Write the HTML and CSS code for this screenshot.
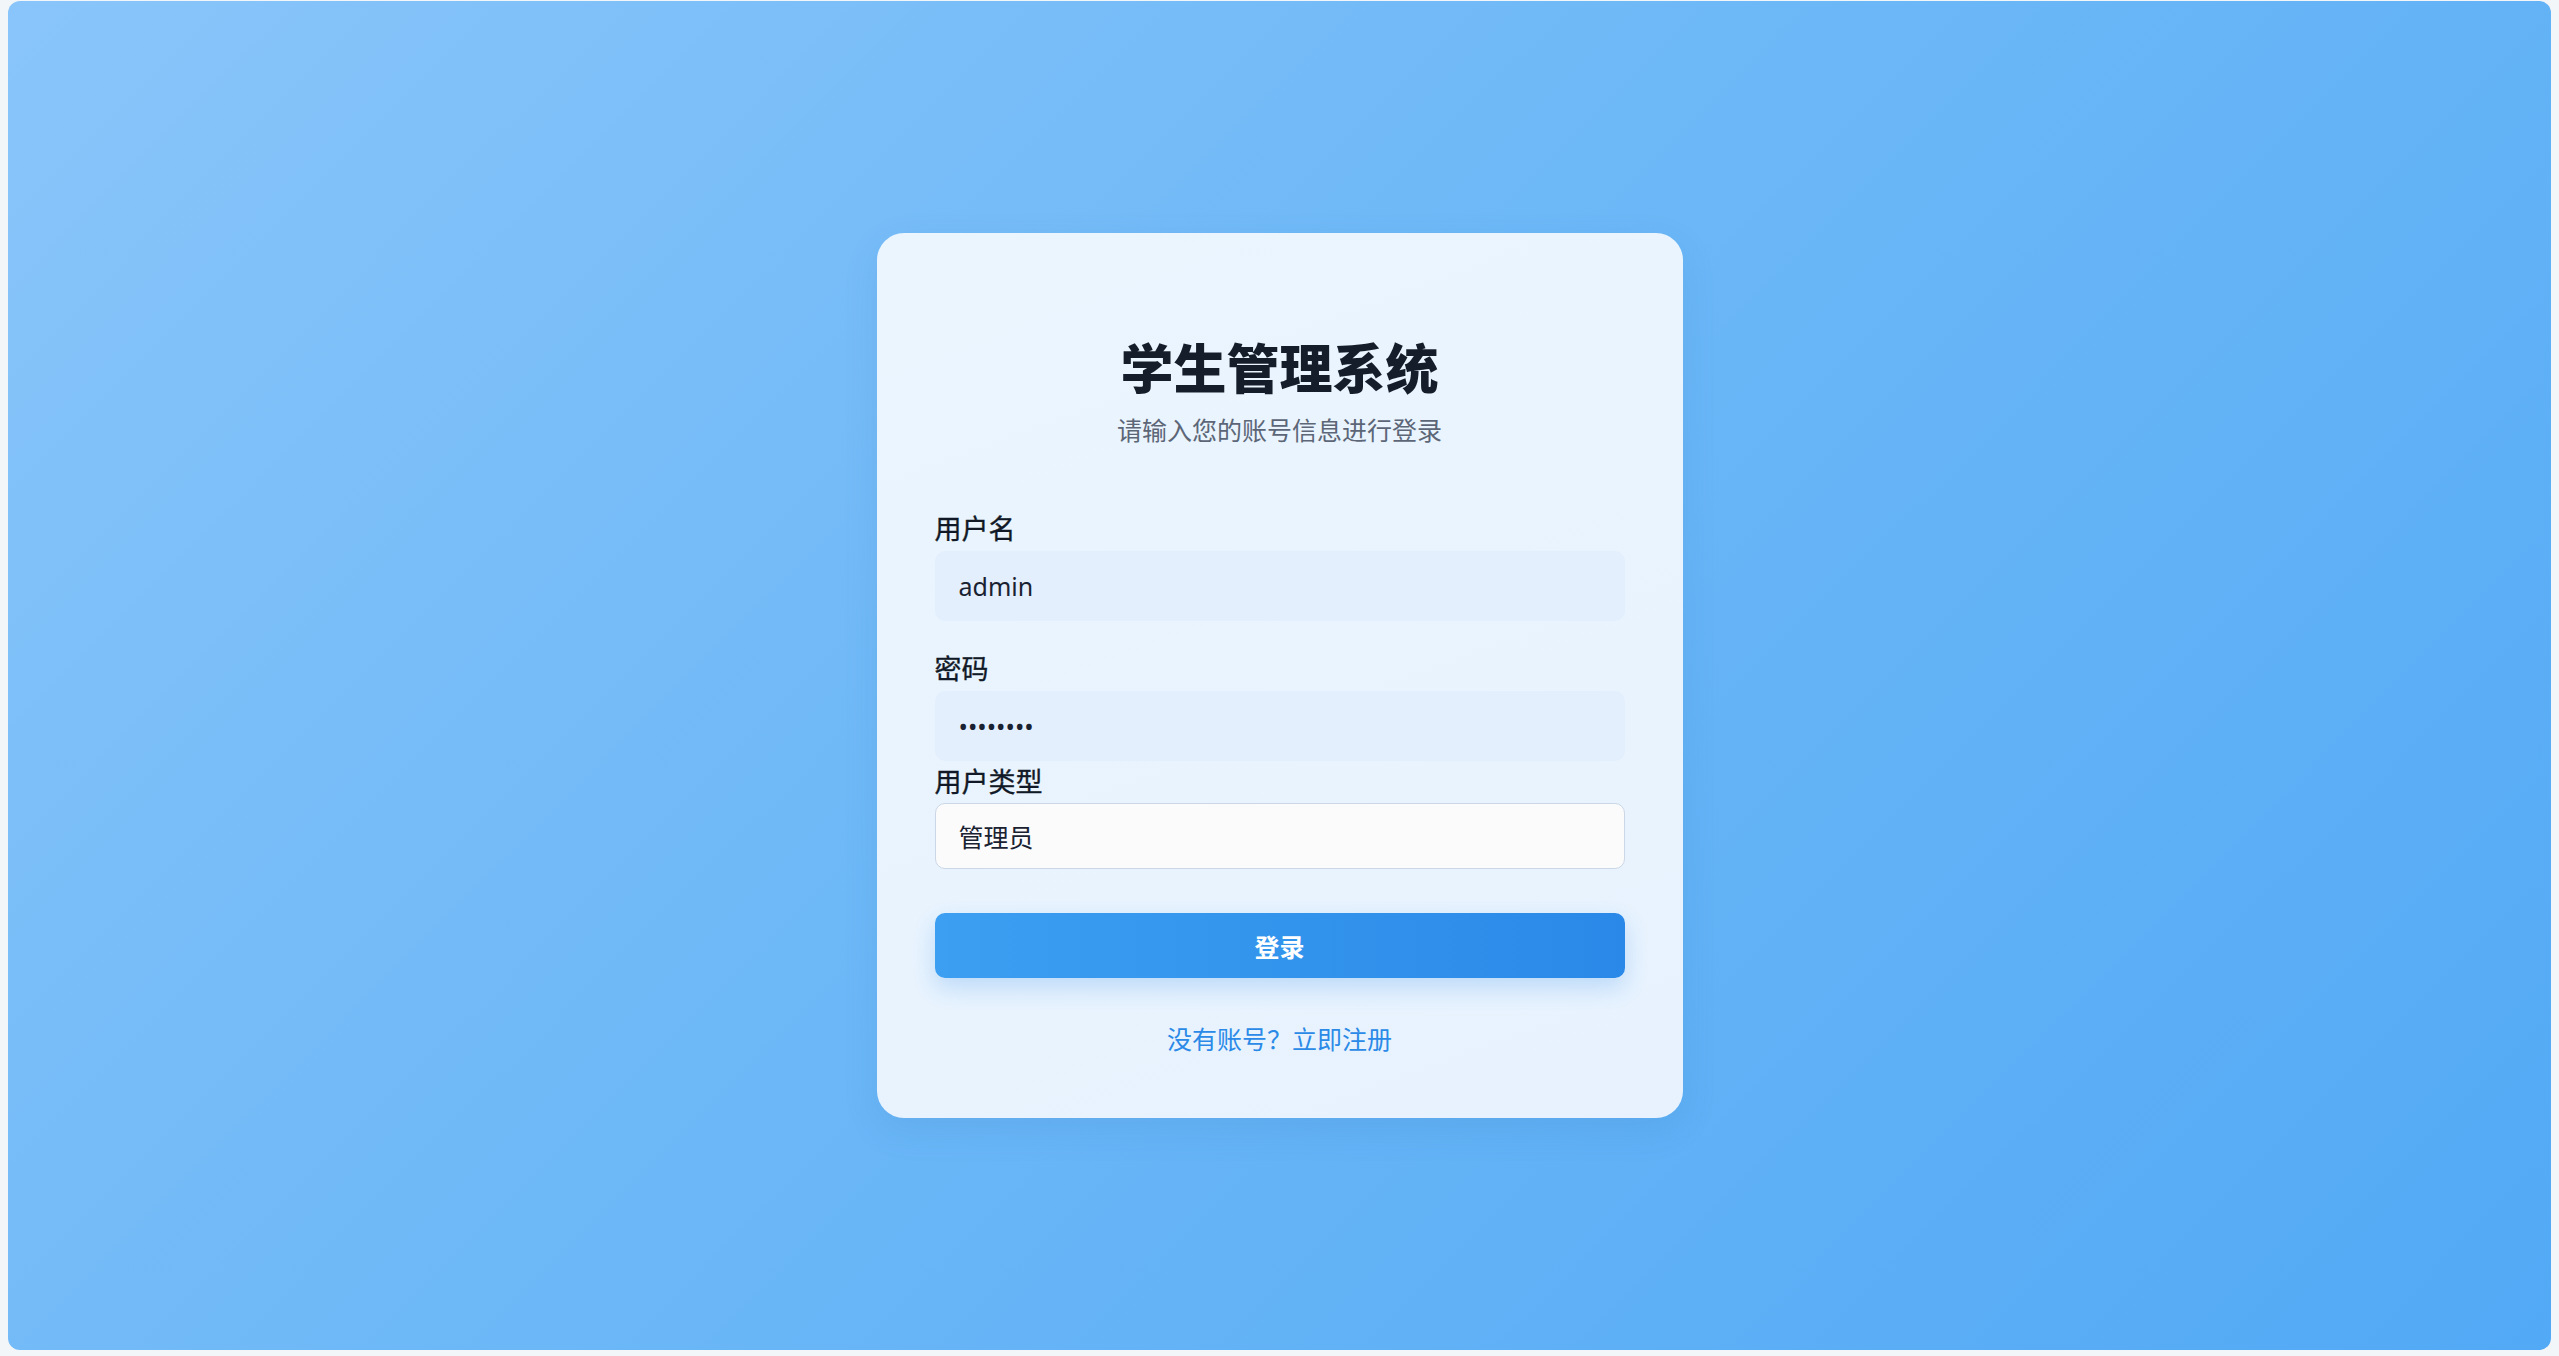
FILE: index.html
```html
<!DOCTYPE html>
<html lang="zh-CN">
<head>
<meta charset="utf-8">
<title>学生管理系统</title>
<link rel="stylesheet" href="styles.css">
</head>
<body>
<div class="app">
  <div class="card">
    <div class="header">
      <h1 class="title">学生管理系统</h1>
      <p class="subtitle">请输入您的账号信息进行登录</p>
    </div>
    <form class="form">
      <div class="group">
        <label class="label" for="u">用户名</label>
        <input class="input" id="u" type="text" value="admin">
      </div>
      <div class="group group-tight">
        <label class="label" for="p">密码</label>
        <input class="input" id="p" type="password" value="password">
      </div>
      <div class="group group-select">
        <label class="label label-select" for="t">用户类型</label>
        <select class="select" id="t">
          <option>管理员</option>
          <option>教师</option>
          <option>学生</option>
        </select>
      </div>
      <button class="btn" type="button">登录</button>
    </form>
    <div class="footer"><a class="link" href="#">没有账号？立即注册</a></div>
  </div>
</div>
</body>
</html>
```

FILE: styles.css
```css
* { box-sizing: border-box; }
html, body { height: 100%; }
body {
  margin: 0;
  padding: 1px 8px 6px;
  background: #f3f6f9;
  font-family: "Noto Sans", "Noto Sans CJK SC", sans-serif;
}
.app {
  height: 1349px;
  border-radius: 12px;
  background: linear-gradient(135deg, #89c5fa 0%, #6db8f7 45%, #52a9f5 100%);
  display: flex;
  align-items: center;
  justify-content: center;
}
.card {
  width: 806px;
  padding: 101px 58px 62px;
  border-radius: 27px;
  background: linear-gradient(160deg, #eaf5fe 0%, #e7f2fe 100%);
  box-shadow: 0 12px 36px rgba(30, 90, 160, 0.10);
}
.header { text-align: center; margin-bottom: 61px; }
.title {
  margin: 0;
  font-family: "Noto Sans CJK SC", sans-serif;
  font-size: 53px;
  line-height: 64px;
  font-weight: 900;
  color: #151d2a;
}
.subtitle {
  margin: 13px 0 0;
  font-family: "Noto Sans CJK SC", sans-serif;
  font-size: 25px;
  line-height: 36px;
  color: #5c6677;
}
.form { display: flex; flex-direction: column; margin: 0; }
.group { display: flex; flex-direction: column; margin-bottom: 27px; }
.group-tight { margin-bottom: 0; }
.group-select { margin-bottom: 44px; }
.label {
  font-family: "Noto Sans CJK SC", sans-serif;
  font-size: 27px;
  line-height: 40px;
  font-weight: 400;
  color: #111926;
  -webkit-text-stroke: 0.35px #111926;
  margin-bottom: 3px;
}
.label-select { margin-bottom: 2px; }
.input {
  height: 70px;
  border: none;
  border-radius: 10px;
  background: #e3effd;
  padding: 0 24px;
  font-family: "Noto Sans", "Noto Sans CJK SC", sans-serif;
  font-size: 25px;
  color: #1a2231;
  outline: none;
}
.select {
  -webkit-appearance: none;
  appearance: none;
  height: 66px;
  border: 1px solid #cbd7e6;
  border-radius: 10px;
  background: #fbfbfc;
  padding: 0 23px;
  font-family: "Noto Sans CJK SC", sans-serif;
  font-size: 25px;
  color: #1a2231;
  outline: none;
}
.btn {
  height: 65px;
  border: none;
  border-radius: 10px;
  background: linear-gradient(90deg, #3c9ff1 0%, #2a89e8 100%);
  color: #ffffff;
  font-family: "Noto Sans CJK SC", sans-serif;
  font-size: 25px;
  font-weight: 700;
  box-shadow: 0 10px 22px rgba(42, 137, 232, 0.22);
  cursor: pointer;
}
.footer {
  margin-top: 42px;
  text-align: center;
  font-family: "Noto Sans CJK SC", sans-serif;
  font-size: 25px;
  line-height: 36px;
  height: 36px;
}
.link {
  color: #2b8ae7;
  text-decoration: none;
}
```
